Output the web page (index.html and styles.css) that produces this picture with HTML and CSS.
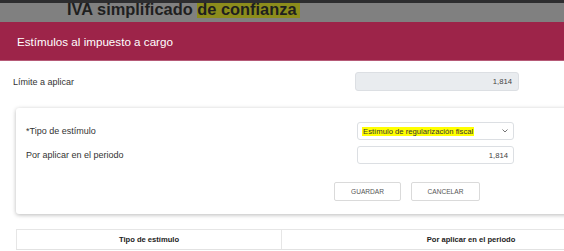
FILE: index.html
```html
<!DOCTYPE html>
<html lang="es">
<head>
<meta charset="utf-8">
<title>Estímulos al impuesto a cargo</title>
<link rel="stylesheet" href="styles.css">
</head>
<body>
<div class="topline"></div>
<div class="titleband">
  <h1 class="page-title">IVA simplificado <span class="mark-dim">de confianza</span></h1>
</div>
<div class="modal-header">Estímulos al impuesto a cargo</div>
<div class="limit-row">
  <span class="label">Límite a aplicar</span>
  <div class="field field-disabled">1,814</div>
</div>
<div class="card">
  <div class="card-row">
    <span class="label">*Tipo de estímulo</span>
    <div class="field field-select">
      <span class="mark">Estímulo de regularización fiscal</span>
      <svg class="chevron" width="6" height="4" viewBox="0 0 6 4"><polyline points="0.5,0.5 3,3 5.5,0.5" fill="none" stroke="#666" stroke-width="0.9"/></svg>
    </div>
  </div>
  <div class="card-row">
    <span class="label">Por aplicar en el periodo</span>
    <div class="field field-num">1,814</div>
  </div>
  <div class="actions">
    <button class="btn btn-save">GUARDAR</button>
    <button class="btn btn-cancel">CANCELAR</button>
  </div>
</div>
<div class="table">
  <div class="th th-1">Tipo de estímulo</div>
  <div class="th th-2">Por aplicar en el periodo</div>
</div>
</body>
</html>
```
FILE: styles.css
```css
html, body {
  margin: 0;
  padding: 0;
  background: #fff;
}
body {
  width: 564px;
  height: 251px;
  overflow: hidden;
  font-family: "Liberation Sans", Arial, sans-serif;
  color: #333;
}
.topline {
  height: 3px;
  background: #2d2d2f;
}
.titleband {
  height: 19px;
  background: #808080;
  overflow: hidden;
  padding-left: 67px;
}
.page-title {
  margin: 0;
  font-size: 16.4px;
  font-weight: bold;
  line-height: 13px;
  color: #1f1f1f;
  white-space: nowrap;
}
.mark-dim {
  background: #8c8c1c;
  padding-right: 3px;
}
.modal-header {
  height: 38px;
  background: #9d2449;
  border-bottom: 1px solid #b65a77;
  color: #fff;
  font-size: 11.65px;
  display: flex;
  align-items: center;
  padding-left: 17px;
}
.label {
  font-size: 9px;
  color: #333;
}
.limit-row {
  display: flex;
  align-items: center;
  padding: 11px 0 0 13px;
}
.limit-row .label {
  width: 342px;
}
.field {
  box-sizing: border-box;
  height: 19px;
  border: 1px solid #dcdfe3;
  border-radius: 3px;
  font-size: 7.7px;
  color: #444;
  display: flex;
  align-items: center;
}
.field-disabled {
  width: 164px;
  background: #e9ecef;
  justify-content: flex-end;
  padding-right: 6px;
}
.card {
  margin: 17px 0 0 16px;
  width: 600px;
  box-sizing: border-box;
  padding: 14px 10px 13px 10px;
  background: #fff;
  box-shadow: 0 1px 4px rgba(0, 0, 0, 0.28);
  border-radius: 3px;
  display: flex;
  flex-direction: column;
  gap: 6px;
}
.card-row {
  display: flex;
  align-items: center;
}
.card-row .label {
  width: 331px;
}
.field-select,
.field-num {
  width: 157px;
  height: 18px;
  background: #fff;
}
.field-select {
  padding-left: 4px;
  justify-content: space-between;
  padding-right: 5px;
}
.mark {
  background: #ffff00;
  color: #333;
  padding: 0 1px;
  line-height: 9px;
}
.chevron {
  display: block;
}
.field-num {
  justify-content: flex-end;
  padding-right: 5px;
}
.actions {
  display: flex;
  gap: 10px;
  padding-left: 308px;
  margin-top: 12px;
}
.btn {
  box-sizing: border-box;
  height: 19px;
  background: #fff;
  border: 1px solid #dadada;
  border-radius: 2px;
  font-family: "Liberation Sans", Arial, sans-serif;
  font-size: 6.6px;
  color: #555;
  padding: 0;
}
.btn-save { width: 67px; }
.btn-cancel { width: 69px; }
.table {
  margin: 15px 0 0 16px;
  display: flex;
  width: 644px;
  border-top: 1px solid #e6e6e6;
  border-bottom: 1px solid #e2e2e2;
}
.th {
  height: 19px;
  display: flex;
  align-items: center;
  justify-content: center;
  font-size: 7.6px;
  font-weight: bold;
  color: #222;
  box-sizing: border-box;
}
.th-1 {
  width: 266px;
  border-left: 1px solid #e6e6e6;
  border-right: 1px solid #e6e6e6;
}
.th-2 {
  width: 378px;
}
```
